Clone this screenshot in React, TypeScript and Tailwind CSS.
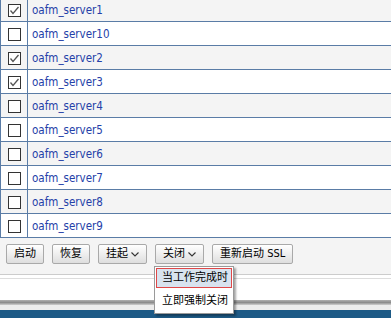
const servers = [
  { name: 'oafm_server1', checked: true },
  { name: 'oafm_server10', checked: false },
  { name: 'oafm_server2', checked: true },
  { name: 'oafm_server3', checked: true },
  { name: 'oafm_server4', checked: false },
  { name: 'oafm_server5', checked: false },
  { name: 'oafm_server6', checked: false },
  { name: 'oafm_server7', checked: false },
  { name: 'oafm_server8', checked: false },
  { name: 'oafm_server9', checked: false },
];

function Box({ checked }: { checked: boolean }) {
  return (
    <span className="w-[13px] h-[13px] border border-[#333333] bg-white flex items-center justify-center">
      {checked && (
        <svg width="11" height="11" viewBox="0 0 11 11">
          <polyline points="1.5,5.5 4,8.5 9.5,2" fill="none" stroke="#555555" strokeWidth="1.3" />
        </svg>
      )}
    </span>
  );
}

function Btn({ label, menu }: { label: string; menu?: boolean }) {
  return (
    <button className="h-[20px] px-[7px] flex items-center gap-[3px] text-[11px] text-black whitespace-nowrap rounded-[2px] border border-[#a9a9a9] bg-gradient-to-b from-white to-[#dedede]">
      <span>{label}</span>
      {menu && (
        <svg width="8" height="5" viewBox="0 0 8 5" className="mt-[1px]">
          <polyline points="0.5,0.5 4,4 7.5,0.5" fill="none" stroke="#333333" strokeWidth="1.1" />
        </svg>
      )}
    </button>
  );
}

export default function App() {
  return (
    <div className="w-[391px] h-[318px] overflow-hidden bg-white relative" style={{ fontFamily: '"DejaVu Sans Condensed", "Noto Sans CJK SC", sans-serif' }}>
      <div className="-mt-[2px]">
        {servers.map((s, i) => (
          <div key={s.name} className={`flex h-[24px] border-b border-[#5a7ca6] ${i % 2 === 0 ? 'bg-[#f4f4f4]' : 'bg-white'}`}>
            <div className="w-[28px] border-l border-r border-[#5a7ca6] flex items-center pl-[7px] pt-[2px]">
              <Box checked={s.checked} />
            </div>
            <div className="flex items-center pl-[4px] pt-[2px] text-[11.5px] text-[#2440a8]">{s.name}</div>
          </div>
        ))}
      </div>

      <div className="bg-[#f4f4f4] h-[37px] pt-[6px] pl-[6px] flex gap-[8px] items-start border-b border-[#cccccc]">
        <Btn label="启动" />
        <Btn label="恢复" />
        <Btn label="挂起" menu />
        <Btn label="关闭" menu />
        <Btn label="重新启动 SSL" />
      </div>
      <div className="h-[4px] bg-white border-b border-[#dddddd]" />
      <div className="h-[21px] bg-white" />
      <div className="h-[5px] bg-gradient-to-b from-[#b0b0b0] via-[#8c8c8c] to-[#cfcfcf]" />
      <div className="h-[5px] bg-[#ececec]" />
      <div className="h-[10px] bg-[#1d5a86]" />

      <div className="absolute left-[154px] top-[266px] w-[80px] h-[48px] bg-white border border-[#9a9a9a] shadow-[2px_2px_2px_rgba(0,0,0,0.35)] p-[1px] text-[11px] text-black whitespace-nowrap">
        <div className="h-[20px] border border-[#e04848] bg-[#d8e3ef] flex items-center pl-[5px]">当工作完成时</div>
        <div className="h-[22px] flex items-center pl-[6px] mt-[2px]">立即强制关闭</div>
      </div>
    </div>
  );
}
